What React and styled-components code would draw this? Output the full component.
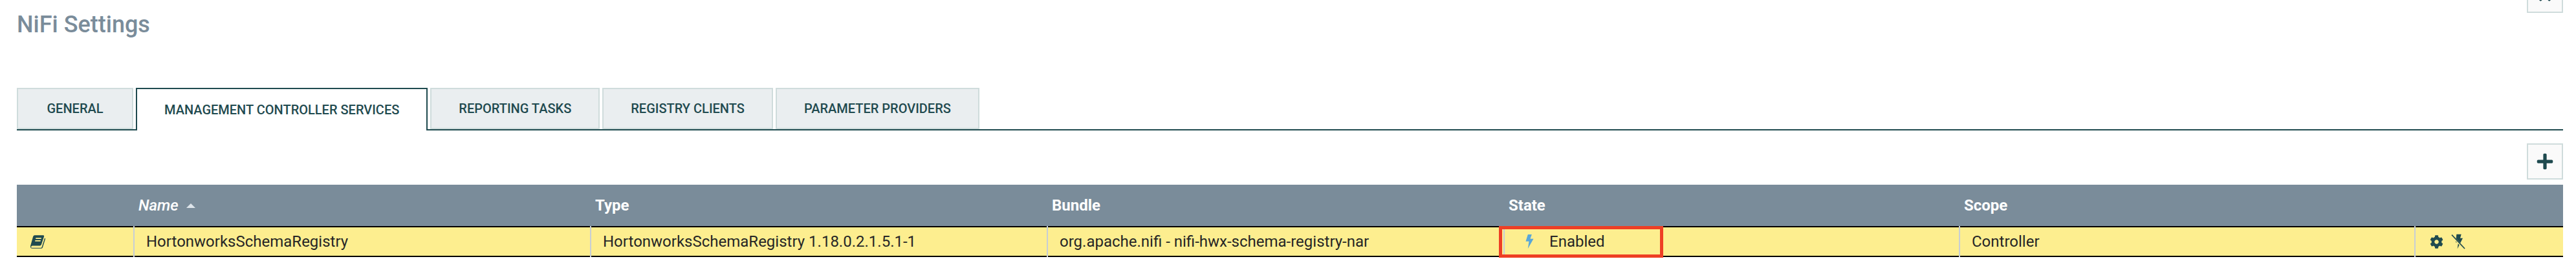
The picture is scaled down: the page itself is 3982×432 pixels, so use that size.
// Packages
import React from "react"
import styled, { createGlobalStyle } from "styled-components"
import { FaCog, FaPlus, FaTimes } from "react-icons/fa"

// Styles
const Teal = "#1f4a4f"
const Slate = "#7a8c9a"
const TabBorder = "#cfdcdc"

const GlobalStyle = createGlobalStyle`
    html,
    body {
        margin: 0;
        padding: 0;
        background: #ffffff;
        overflow: hidden;
    }

    body {
        font-family: Roboto, "Liberation Sans", sans-serif;
    }
`

const Page = styled.div`
    width: 3982px;
    height: 432px;
    box-sizing: border-box;
    padding: 0 20px 0 26px;
    overflow: hidden;
`

const Header = styled.header`
    display: flex;
    justify-content: space-between;
    align-items: flex-start;
    height: 136px;
`

const Title = styled.h1`
    margin: 16px 0 0;
    font-size: 36px;
    line-height: 44px;
    font-weight: 500;
    color: ${Slate};
`

const IconButton = styled.button`
    box-sizing: border-box;
    width: 56px;
    height: 56px;
    padding: 0;
    display: flex;
    align-items: center;
    justify-content: center;
    background: #fafafa;
    border: 2px solid ${TabBorder};
    color: ${Teal};
    font-size: 28px;
`

const CloseButton = styled(IconButton)`
    margin-top: -36px;
`

const Tabs = styled.nav`
    display: flex;
    gap: 4px;
    height: 64px;
    border-bottom: 2px solid ${Teal};
`

const Tab = styled.div`
    box-sizing: border-box;
    height: ${(props) => (props.$active ? "66px" : "64px")};
    min-width: 180px;
    padding: 0 42px;
    display: flex;
    align-items: center;
    justify-content: center;
    background: ${(props) => (props.$active ? "#ffffff" : "#eaeef0")};
    border: 2px solid ${(props) => (props.$active ? Teal : TabBorder)};
    border-bottom: ${(props) => (props.$active ? "none" : `2px solid ${TabBorder}`)};
    color: ${Teal};
    font-size: 20px;
    font-weight: 500;
    white-space: nowrap;
`

const Toolbar = styled.div`
    display: flex;
    justify-content: flex-end;
    padding: 20px 0 8px;
`

const Grid = styled.div`
    display: grid;
    grid-template-columns: 180px 706px 706px 706px 704px 704px 230px;
`

const HeaderCell = styled.div`
    height: 64px;
    padding-left: 8px;
    display: flex;
    align-items: center;
    gap: 12px;
    background: ${Slate};
    color: #ffffff;
    font-size: 24px;
    font-weight: ${(props) => (props.$sorted ? 500 : 700)};
    font-style: ${(props) => (props.$sorted ? "italic" : "normal")};
`

const SortArrow = styled.span`
    width: 0;
    height: 0;
    border-left: 7px solid transparent;
    border-right: 7px solid transparent;
    border-bottom: 7px solid #dde4ea;
`

const Cell = styled.div`
    position: relative;
    box-sizing: border-box;
    height: 48px;
    display: flex;
    align-items: center;
    gap: ${(props) => props.$gap || 0}px;
    padding-left: ${(props) => props.$pad ?? 20}px;
    background: #fdee8f;
    border-top: 2px solid #000000;
    border-bottom: 2px solid #000000;
    color: #262626;
    font-size: 24px;

    &::before {
        content: "";
        display: ${(props) => (props.$first ? "none" : "block")};
        position: absolute;
        left: 0;
        top: -2px;
        bottom: -2px;
        width: 2px;
        background: #c7ced6;
    }
`

const Highlight = styled.div`
    position: absolute;
    left: -7px;
    top: -2px;
    width: 254px;
    height: 49px;
    box-sizing: border-box;
    border: 5px solid #ee3f24;
    pointer-events: none;
`

const Cog = styled(FaCog)`
    width: 21px;
    height: 21px;
    color: ${Teal};
`

// Drawn icons
const BookIcon = () => (
    <svg width="23" height="21" viewBox="0 0 68 61" fill={Teal}>
        <path d="M20 0H58Q64 0 62 7L50 43Q48 48 43 48H10Q5 48 4 52L3 53Q2 58 8 58H48Q51 58 52 55L64 17Q65 13 68 14V18L56 56Q54 61 49 61H8Q-1 61 0 50L12 7Q14 0 20 0Z" />
        <path d="M25 12H50L49 17H24ZM22 23H47L46 28H21Z" fill="#fdee8f" />
    </svg>
)

const BoltIcon = () => (
    <svg width="13" height="22" viewBox="0 0 36 66" fill="#5aa7d8">
        <path d="M10 0H28L21 20H36L10 66L15 32H0Z" />
    </svg>
)

const BoltOffIcon = () => (
    <svg width="22" height="24" viewBox="0 0 64 72">
        <path d="M24 2H46L41 20H53L28 70L32 40H20Z" fill={Teal} />
        <path d="M2 8L62 72" stroke="#fdee8f" strokeWidth="9" />
        <path d="M2 5L62 69" stroke={Teal} strokeWidth="5" />
    </svg>
)

const tabs = [
    "GENERAL",
    "MANAGEMENT CONTROLLER SERVICES",
    "REPORTING TASKS",
    "REGISTRY CLIENTS",
    "PARAMETER PROVIDERS",
]

export default function App() {
    return (
        <Page>
            <GlobalStyle />

            <Header>
                <Title>NiFi Settings</Title>
                <CloseButton aria-label="Close">
                    <FaTimes />
                </CloseButton>
            </Header>

            <Tabs>
                {tabs.map((tab, i) => (
                    <Tab key={tab} $active={i === 1}>
                        {tab}
                    </Tab>
                ))}
            </Tabs>

            <Toolbar>
                <IconButton aria-label="Add">
                    <FaPlus />
                </IconButton>
            </Toolbar>

            <Grid>
                <HeaderCell />
                <HeaderCell $sorted>
                    Name
                    <SortArrow />
                </HeaderCell>
                <HeaderCell>Type</HeaderCell>
                <HeaderCell>Bundle</HeaderCell>
                <HeaderCell>State</HeaderCell>
                <HeaderCell>Scope</HeaderCell>
                <HeaderCell />

                <Cell $first $pad={21}>
                    <BookIcon />
                </Cell>
                <Cell>HortonworksSchemaRegistry</Cell>
                <Cell>HortonworksSchemaRegistry 1.18.0.2.1.5.1-1</Cell>
                <Cell>org.apache.nifi - nifi-hwx-schema-registry-nar</Cell>
                <Cell $pad={34} $gap={24}>
                    <BoltIcon />
                    Enabled
                    <Highlight />
                </Cell>
                <Cell>Controller</Cell>
                <Cell $pad={24} $gap={12}>
                    <Cog />
                    <BoltOffIcon />
                </Cell>
            </Grid>
        </Page>
    )
}
